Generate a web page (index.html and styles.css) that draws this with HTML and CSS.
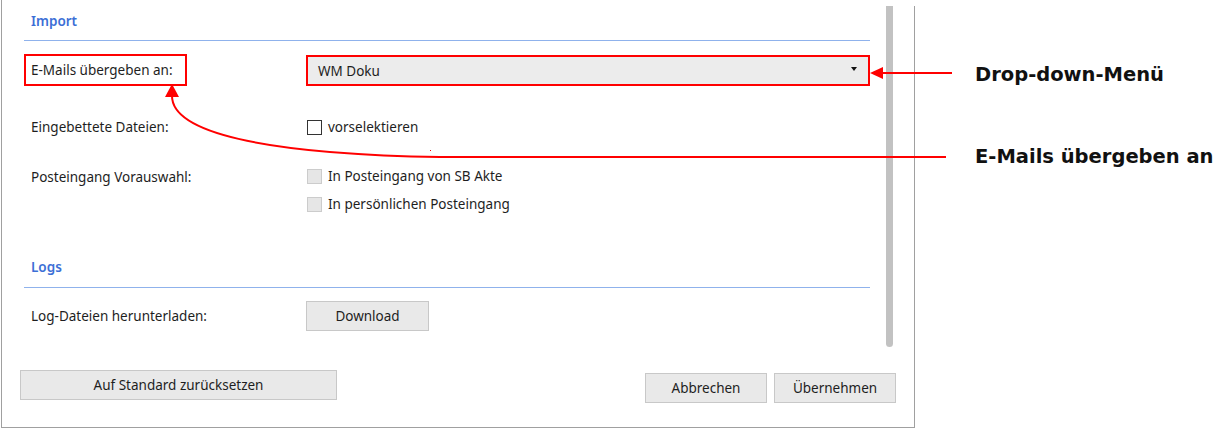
FILE: index.html
```html
<!DOCTYPE html>
<html lang="de">
<head>
    <meta charset="UTF-8">
    <title>Einstellungen</title>
    <link rel="stylesheet" href="styles.css">
</head>
<body>
    <div class="page">
        <div class="dialog">
            <div class="scroll-area">
                <div class="settings">
                    <div class="section-title">Import</div>

                    <div class="row row-mail">
                        <div class="label-col">
                            <span class="label marked">E-Mails übergeben an:</span>
                        </div>
                        <div class="select">
                            <span>WM Doku</span>
                            <span class="caret"></span>
                        </div>
                    </div>

                    <div class="row row-embedded">
                        <div class="label-col"><span class="label">Eingebettete Dateien:</span></div>
                        <label class="check"><span class="box"></span>vorselektieren</label>
                    </div>

                    <div class="row row-inbox">
                        <div class="label-col"><span class="label">Posteingang Vorauswahl:</span></div>
                        <div class="check-group">
                            <label class="check"><span class="box disabled"></span>In Posteingang von SB Akte</label>
                            <label class="check"><span class="box disabled"></span>In persönlichen Posteingang</label>
                        </div>
                    </div>

                    <div class="section-title logs">Logs</div>

                    <div class="row row-download">
                        <div class="label-col"><span class="label">Log-Dateien herunterladen:</span></div>
                        <button class="btn btn-download">Download</button>
                    </div>
                </div>
                <div class="scrollbar"></div>
            </div>

            <div class="footer">
                <button class="btn btn-reset">Auf Standard zurücksetzen</button>
                <div class="footer-right">
                    <button class="btn btn-action">Abbrechen</button>
                    <button class="btn btn-action">Übernehmen</button>
                </div>
            </div>
        </div>

        <div class="notes">
            <div class="note note-dropdown">Drop-down-Menü</div>
            <div class="note note-mail">E-Mails übergeben an</div>
        </div>

        <svg class="arrows" width="1219" height="429" viewBox="0 0 1219 429">
            <path d="M952 73 H880" stroke="#ff0000" stroke-width="2" fill="none"/>
            <polygon points="870,73 883,67 883,79" fill="#ff0000"/>
            <path d="M946 157 H440 C260 154 172 132 172 96" stroke="#ff0000" stroke-width="2" fill="none"/>
            <polygon points="172,84 165,97 179,97" fill="#ff0000"/>
            <rect x="430" y="150" width="1" height="1" fill="#ff0000"/>
        </svg>
    </div>
</body>
</html>
```

FILE: styles.css
```css
body {
    margin: 0;
    font-family: "Noto Sans", "Open Sans", sans-serif;
    font-size: 13.5px;
    color: #1e1e1e;
    background: #fff;
}
.page {
    position: relative;
    display: flex;
    width: 1219px;
    height: 429px;
}
.dialog {
    position: relative;
    box-sizing: border-box;
    width: 914px;
    height: 428px;
    margin-left: 1px;
    border-left: 1px solid #a0a0a0;
    border-bottom: 1px solid #a0a0a0;
}
/* right window edge starts a few pixels below the crop */
.dialog::after {
    content: "";
    position: absolute;
    right: 0;
    top: 6px;
    bottom: 0;
    width: 1px;
    background: #a0a0a0;
}
.scroll-area {
    display: flex;
    height: 370px;
}
.settings {
    width: 846px;
    padding-left: 22px;
}
.scrollbar {
    width: 7px;
    height: 341px;
    margin: 6px 0 0 16px;
    background: #c2c2c2;
    border-radius: 0 0 4px 4px;
}
.section-title {
    box-sizing: border-box;
    height: 41px;
    display: flex;
    align-items: center;
    padding: 2px 0 0 7px;
    border-bottom: 1px solid #8fb2ec;
    color: #3c6fd6;
    font-weight: 600;
    font-size: 13.5px;
}
.section-title.logs {
    margin-top: 28px;
    padding-top: 0;
}
.row {
    display: flex;
    align-items: center;
    box-sizing: border-box;
}
.row-mail { height: 58px; }
.row-embedded { height: 56px; }
.row-inbox {
    height: 64px;
    align-items: flex-start;
    padding-top: 7px;
}
.row-download { height: 56px; }
.label-col {
    width: 282px;
    flex-shrink: 0;
}
.label {
    display: inline-block;
    padding-left: 7px;
}
.row-inbox .label {
    margin-top: 6px;
}
.label.marked {
    box-sizing: border-box;
    height: 32px;
    width: 163px;
    line-height: 28px;
    padding-left: 5px;
    border: 2px solid #ff0000;
}
.select {
    box-sizing: border-box;
    display: flex;
    align-items: center;
    justify-content: space-between;
    width: 565px;
    height: 31px;
    padding: 0 11px 0 10px;
    background: #ececec;
    border: 2px solid #ff0000;
    margin-top: 1px;
}
.caret {
    width: 0;
    height: 0;
    border-left: 3.5px solid transparent;
    border-right: 3.5px solid transparent;
    border-top: 4px solid #111;
    margin-top: -3px;
}
.check {
    display: flex;
    align-items: center;
    gap: 6px;
    height: 28px;
    padding-left: 1px;
}
.check-group {
    display: flex;
    flex-direction: column;
}
.box {
    box-sizing: border-box;
    width: 15px;
    height: 15px;
    border: 1px solid #333;
    background: #fff;
}
.box.disabled {
    border-color: #cccccc;
    background: #e6e6e6;
}
.btn {
    box-sizing: border-box;
    font-family: inherit;
    font-size: 13.5px;
    color: #1e1e1e;
    background: #e9e9e9;
    border: 1px solid #c8c8c8;
    padding: 0;
    height: 30px;
}
.btn-download {
    width: 123px;
}
.footer {
    display: flex;
    justify-content: space-between;
    align-items: flex-start;
    padding: 0 19px 0 18px;
}
.btn-reset {
    width: 317px;
}
.footer-right {
    display: flex;
    gap: 7px;
    margin-top: 3px;
}
.btn-action {
    width: 122px;
}
.notes {
    padding: 62px 0 0 60px;
    font-family: "DejaVu Sans", Verdana, sans-serif;
    font-weight: bold;
    font-size: 19.5px;
    color: #111;
}
.note {
    height: 26px;
    line-height: 26px;
    white-space: nowrap;
}
.note-mail {
    margin-top: 56px;
}
.arrows {
    position: absolute;
    left: 0;
    top: 0;
    pointer-events: none;
}
```
